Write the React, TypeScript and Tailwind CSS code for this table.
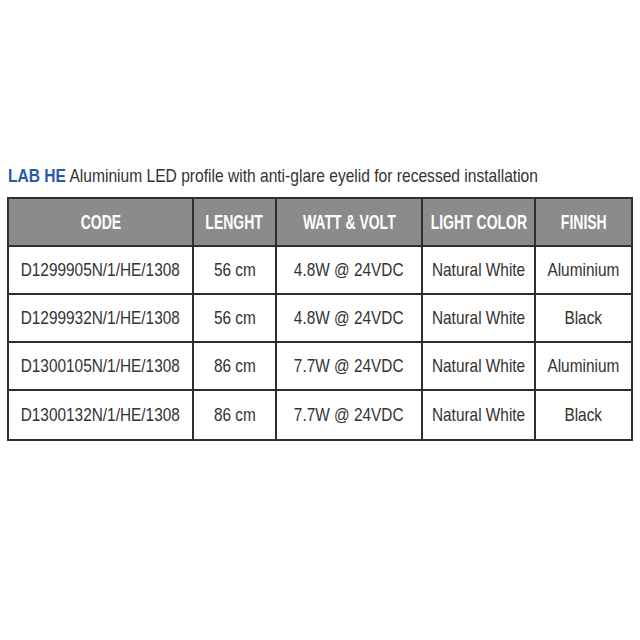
import React from 'react';

const rows = [
  ['D1299905N/1/HE/1308', '56 cm', '4.8W @ 24VDC', 'Natural White', 'Aluminium'],
  ['D1299932N/1/HE/1308', '56 cm', '4.8W @ 24VDC', 'Natural White', 'Black'],
  ['D1300105N/1/HE/1308', '86 cm', '7.7W @ 24VDC', 'Natural White', 'Aluminium'],
  ['D1300132N/1/HE/1308', '86 cm', '7.7W @ 24VDC', 'Natural White', 'Black'],
];

const heads = ['CODE', 'LENGHT', 'WATT & VOLT', 'LIGHT COLOR', 'FINISH'];

export default function App() {
  return (
    <div className="w-[640px] h-[640px] bg-white pt-[163px] px-[7px] font-['Liberation_Sans',sans-serif]">
      <p className="text-[19px] leading-[26px] text-[#333] pl-px whitespace-nowrap">
        <span className="inline-block origin-left scale-x-[0.82]">
          <span className="font-bold text-[#2a5aa6]">LAB HE</span> Aluminium LED profile with anti-glare eyelid for recessed installation
        </span>
      </p>
      <div className="mt-[8px] w-[626px] border-2 border-[#2e2e2e] grid grid-cols-[185px_83px_146px_113px_95px]">
        {heads.map((h, i) => (
          <div key={h} className={`h-[48px] bg-[#8b8b8b] text-white font-bold text-[20px] flex items-center justify-center whitespace-nowrap border-b-2 border-[#2e2e2e] ${i < 4 ? 'border-r-2' : ''}`}>
            <span className="inline-block scale-x-[0.7]">{h}</span>
          </div>
        ))}
        {rows.map((r, ri) =>
          r.map((c, i) => (
            <div key={ri + '-' + i} className={`h-[48px] text-[#333] text-[19px] flex items-center justify-center whitespace-nowrap border-[#2e2e2e] ${i < 4 ? 'border-r-2' : ''} ${ri < 3 ? 'border-b-2' : ''}`}>
              <span className="inline-block scale-x-[0.81]">{c}</span>
            </div>
          ))
        )}
      </div>
    </div>
  );
}
